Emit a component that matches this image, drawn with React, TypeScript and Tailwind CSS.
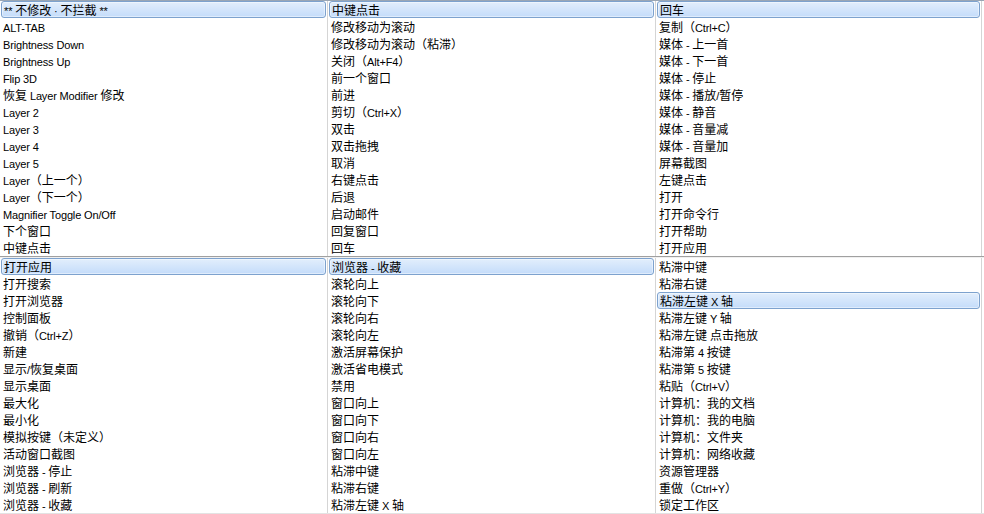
import React from "react";

type Col = { items: string[]; sel: number };

const top: Col[] = [
  {
    sel: 0,
    items: [
      "** 不修改 · 不拦截 **",
      "ALT-TAB",
      "Brightness Down",
      "Brightness Up",
      "Flip 3D",
      "恢复 Layer Modifier 修改",
      "Layer 2",
      "Layer 3",
      "Layer 4",
      "Layer 5",
      "Layer（上一个）",
      "Layer（下一个）",
      "Magnifier Toggle On/Off",
      "下个窗口",
      "中键点击",
    ],
  },
  {
    sel: 0,
    items: [
      "中键点击",
      "修改移动为滚动",
      "修改移动为滚动（粘滞）",
      "关闭（Alt+F4）",
      "前一个窗口",
      "前进",
      "剪切（Ctrl+X）",
      "双击",
      "双击拖拽",
      "取消",
      "右键点击",
      "后退",
      "启动邮件",
      "回复窗口",
      "回车",
    ],
  },
  {
    sel: 0,
    items: [
      "回车",
      "复制（Ctrl+C）",
      "媒体 - 上一首",
      "媒体 - 下一首",
      "媒体 - 停止",
      "媒体 - 播放/暂停",
      "媒体 - 静音",
      "媒体 - 音量减",
      "媒体 - 音量加",
      "屏幕截图",
      "左键点击",
      "打开",
      "打开命令行",
      "打开帮助",
      "打开应用",
    ],
  },
];

const bottom: Col[] = [
  {
    sel: 0,
    items: [
      "打开应用",
      "打开搜索",
      "打开浏览器",
      "控制面板",
      "撤销（Ctrl+Z）",
      "新建",
      "显示/恢复桌面",
      "显示桌面",
      "最大化",
      "最小化",
      "模拟按键（未定义）",
      "活动窗口截图",
      "浏览器 - 停止",
      "浏览器 - 刷新",
      "浏览器 - 收藏",
    ],
  },
  {
    sel: 0,
    items: [
      "浏览器 - 收藏",
      "滚轮向上",
      "滚轮向下",
      "滚轮向右",
      "滚轮向左",
      "激活屏幕保护",
      "激活省电模式",
      "禁用",
      "窗口向上",
      "窗口向下",
      "窗口向右",
      "窗口向左",
      "粘滞中键",
      "粘滞右键",
      "粘滞左键 X 轴",
    ],
  },
  {
    sel: 2,
    items: [
      "粘滞中键",
      "粘滞右键",
      "粘滞左键 X 轴",
      "粘滞左键 Y 轴",
      "粘滞左键 点击拖放",
      "粘滞第 4 按键",
      "粘滞第 5 按键",
      "粘贴（Ctrl+V）",
      "计算机：我的文档",
      "计算机：我的电脑",
      "计算机：文件夹",
      "计算机：网络收藏",
      "资源管理器",
      "重做（Ctrl+Y）",
      "锁定工作区",
    ],
  },
];

const CJK = /([\u3000-\u9fff\uff00-\uffef]+)/;

function Text({ s }: { s: string }) {
  const parts = s.split(CJK).filter((p) => p.length > 0);
  return (
    <span className="whitespace-pre">
      {parts.map((p, i) =>
        /[\u3000-\u9fff\uff00-\uffef]/.test(p) ? (
          <span key={i} className="font-['Noto_Sans_CJK_SC',sans-serif] text-[12px]">
            {p}
          </span>
        ) : (
          <span key={i} className="font-['Liberation_Sans',Arial,sans-serif] text-[11px] tracking-[-0.15px]">
            {p}
          </span>
        )
      )}
    </span>
  );
}

function Column({ col, width }: { col: Col; width: string }) {
  return (
    <div className={`flex flex-col ${width}`}>
      {col.items.map((it, i) =>
        i === col.sel ? (
          <div
            key={i}
            className="mx-px block h-[17px] overflow-hidden whitespace-nowrap rounded-[3px] border border-[#7da2ce] bg-gradient-to-b from-[#e2eefc] to-[#c4dcfa] pl-[2px] leading-[15px] text-black shadow-[inset_0_0_0_1px_rgba(255,255,255,0.45)]"
          >
            <Text s={it} />
          </div>
        ) : (
          <div key={i} className="block h-[17px] overflow-hidden whitespace-nowrap pl-[3px] leading-[17px] text-black">
            <Text s={it} />
          </div>
        )
      )}
    </div>
  );
}

function Panel({ cols }: { cols: Col[] }) {
  return (
    <div className="flex h-[255px] overflow-hidden">
      <Column col={cols[0]} width="w-[327px]" />
      <div className="w-px bg-[#d5d5d5]" />
      <Column col={cols[1]} width="w-[327px]" />
      <div className="w-px bg-[#d5d5d5]" />
      <Column col={cols[2]} width="w-[325px]" />
      <div className="w-px bg-[#d5d5d5]" />
      <div className="w-[2px] bg-white" />
    </div>
  );
}

export default function App() {
  return (
    <div className="h-[514px] w-[984px] overflow-hidden bg-white">
      <div className="h-px bg-[#9aa6b4]" />
      <Panel cols={top} />
      <div className="h-px bg-[#a0a0a0]" />
      <div className="h-px bg-[#f0f0f0]" />
      <Panel cols={bottom} />
      <div className="h-px bg-[#e3e3e3]" />
    </div>
  );
}
